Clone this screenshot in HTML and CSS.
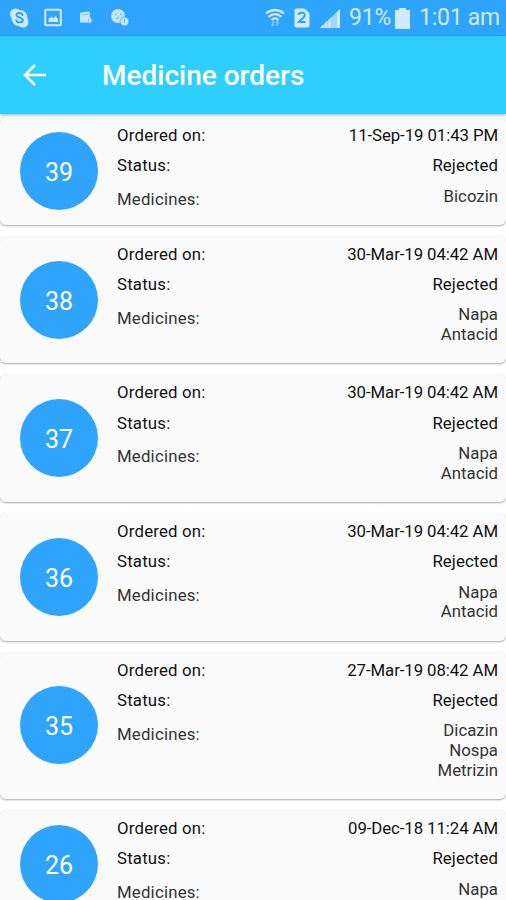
FILE: index.html
```
<!DOCTYPE html>
<html lang="en">
<head>
<meta charset="utf-8">
<title>Medicine orders</title>
<link rel="stylesheet" href="styles.css">
</head>
<body>
<div class="status-bar">
  <div class="notifications">
    <svg width="22" height="22" viewBox="0 0 22 22"><circle cx="11.5" cy="11" r="8" fill="#d0eaff"/><circle cx="7.500" cy="7" r="5.500" fill="#d0eaff"/><circle cx="15" cy="15" r="5.500" fill="#d0eaff"/><path d="M14.500 8c-.6-2.600-6-2.600-6 .1 0 3.100 6.300 2 6.300 5 0 3.100-6 3-6.500.2" fill="none" stroke="#2f9ffc" stroke-width="1.900" stroke-linecap="round"/></svg>
    <svg width="20" height="22" viewBox="0 0 20 22"><rect x="2.200" y="2.700" width="15.600" height="15.600" rx="1" fill="none" stroke="#d0eaff" stroke-width="2"/><path d="M5.500 15v-3l3-2.500 2 2 2-2.500 2.500 3v3z" fill="#d0eaff"/></svg>
    <svg width="16" height="22" viewBox="0 0 16 22"><path d="M3 5.500l8-1 1 2v4l2.500 3-3 3-1-1H2V6.500z" fill="#c5e5ff"/><path d="M4 7.500h7M10.500 12v3" stroke="#7fc4ff"/></svg>
    <svg width="20" height="22" viewBox="0 0 20 22"><circle cx="8" cy="9" r="7" fill="#c5e5ff"/><circle cx="14.500" cy="14.500" r="4.500" fill="#c5e5ff" stroke="#2fa4fd" stroke-width=".8"/><path d="M5 7.500h1.500M10 7.500h1.500M6 12l3-2M14.500 12v4" stroke="#6bbcff" stroke-width="1.300"/></svg>
  </div>
  <svg class="wifi" width="20" height="22" viewBox="0 0 20 22" fill="none" stroke="#cfeaff"><path d="M1 6.500Q10-.5 19 6.500M3.500 9.800Q10 4.500 16.500 9.800M6.500 12.800Q10 9.800 13.500 12.800" stroke-width="2.200"/><path d="M8.200 14v5M6.700 17l1.500 2M12 19v-5l1.500 2" stroke="#8bcaff" stroke-width="1.500"/></svg>
  <svg class="sim" width="16" height="20" viewBox="0 0 16 20"><path d="M2 .5h8.500L15.500 5v12.500q0 2-2 2H2q-1.500 0-1.500-2V2.500q0-2 1.500-2z" fill="#d0eaff"/><path d="M4.500 7c.3-3.300 6.300-3.200 6.300.3 0 2.200-4.300 4.500-6 6.700H11.500" fill="none" stroke="#2f9ffc" stroke-width="1.800"/></svg>
  <svg class="signal" width="20" height="19" viewBox="0 0 20 19"><path d="M0 19L20 0v19z" fill="#a3d6ff"/><path d="M0 19l4-4v4zM5 19v-5l2-2v7zM8.500 19v-8l2-2v10zM17 19V3L20 0v19z" fill="#d0eaff"/></svg>
  <span class="percent">91%</span>
  <svg class="battery" width="15" height="21" viewBox="0 0 15 21"><path d="M4 0h7v2h4v19H0V2h4z" fill="#d0eaff"/></svg>
  <span class="clock">1:01 am</span>
</div>
<header class="toolbar">
  <svg class="back" width="24" height="24" viewBox="0 0 24 24"><path d="M23 12H2M12 2L2 12l10 10" fill="none" stroke="#fff" stroke-width="2.500"/></svg>
  <h1>Medicine orders</h1>
</header>
<main class="orders">
  <article class="card">
    <div class="badge">39</div>
    <dl><dt>Ordered on:</dt><dd class="date">11-Sep-19 01:43 PM</dd><dt>Status:</dt><dd>Rejected</dd><dt class="medicines">Medicines:</dt><dd class="names">Bicozin</dd></dl>
  </article>
  <article class="card">
    <div class="badge">38</div>
    <dl><dt>Ordered on:</dt><dd class="date">30-Mar-19 04:42 AM</dd><dt>Status:</dt><dd>Rejected</dd><dt class="medicines">Medicines:</dt><dd class="names">Napa<br>Antacid</dd></dl>
  </article>
  <article class="card">
    <div class="badge">37</div>
    <dl><dt>Ordered on:</dt><dd class="date">30-Mar-19 04:42 AM</dd><dt>Status:</dt><dd>Rejected</dd><dt class="medicines">Medicines:</dt><dd class="names">Napa<br>Antacid</dd></dl>
  </article>
  <article class="card">
    <div class="badge">36</div>
    <dl><dt>Ordered on:</dt><dd class="date">30-Mar-19 04:42 AM</dd><dt>Status:</dt><dd>Rejected</dd><dt class="medicines">Medicines:</dt><dd class="names">Napa<br>Antacid</dd></dl>
  </article>
  <article class="card">
    <div class="badge">35</div>
    <dl><dt>Ordered on:</dt><dd class="date">27-Mar-19 08:42 AM</dd><dt>Status:</dt><dd>Rejected</dd><dt class="medicines">Medicines:</dt><dd class="names">Dicazin<br>Nospa<br>Metrizin</dd></dl>
  </article>
  <article class="card">
    <div class="badge">26</div>
    <dl><dt>Ordered on:</dt><dd class="date">09-Dec-18 11:24 AM</dd><dt>Status:</dt><dd>Rejected</dd><dt class="medicines">Medicines:</dt><dd class="names">Napa</dd></dl>
  </article>
</main>
</body>
</html>
```
FILE: styles.css
```
* { box-sizing: border-box; }
body {
  margin: 0;
  height: 900px;
  overflow: hidden;
  display: flex;
  flex-direction: column;
  background: #fff;
  font-family: Roboto, sans-serif;
  color: #111;
}
svg { display: block; flex: none; }
.status-bar {
  flex: none;
  height: 36px;
  padding: 0 7px 0 8px;
  display: flex;
  align-items: center;
  background: #2fa4fd;
  color: #d0eaff;
  font-size: 23px;
  line-height: 36px;
  white-space: nowrap;
}
.notifications { display: flex; margin-right: auto; }
.notifications svg + svg { margin-left: 13px; }
.notifications svg:nth-child(3) { margin-left: 15px; }
.notifications svg:nth-child(4) { margin-left: 16px; }
.sim { margin-left: 9px; }
.signal { margin-left: 10px; }
.percent { margin-left: 9px; width: 43px; letter-spacing: -.2px; }
.battery { margin-left: 3px; }
.clock { margin-left: 9px; width: 80px; letter-spacing: -.25px; }
.toolbar {
  flex: none;
  height: 78px;
  display: flex;
  align-items: center;
  padding-left: 23px;
  background: #2ecfff;
  box-shadow: 0 1px 3px rgba(0, 0, 0, .35);
  z-index: 1;
}
h1 {
  margin: 2px 0 0 55px;
  color: #fff;
  font-size: 28px;
  font-weight: 500;
  line-height: 38px;
}
.orders {
  flex: none;
  display: flex;
  flex-direction: column;
  gap: 11px;
  padding-top: 3px;
}
.card {
  display: flex;
  align-items: center;
  padding: 0 8px 0 20px;
  border-radius: 6px;
  background: #fafafa;
  box-shadow: 0 1px 2px rgba(0, 0, 0, .34);
}
.badge {
  flex: none;
  width: 78px;
  height: 78px;
  border-radius: 50%;
  background: #2fa4fd;
  color: #fff;
  font-size: 25px;
  line-height: 81px;
  text-align: center;
}
dl {
  flex: 1;
  margin: 0 0 0 19px;
  padding: 9px 0 18.6px;
  display: grid;
  grid-template-columns: auto 1fr;
  row-gap: 10.6px;
  font-size: 16.8px;
  line-height: 19.7px;
}
dt, dd { margin: 0; }
dt { letter-spacing: .2px; }
dd { text-align: right; letter-spacing: .1px; }
.date { letter-spacing: -.08px; }
.medicines { height: 19.7px; padding-top: 3.4px; color: #333; }
.names { color: #333; letter-spacing: 0; }
```
